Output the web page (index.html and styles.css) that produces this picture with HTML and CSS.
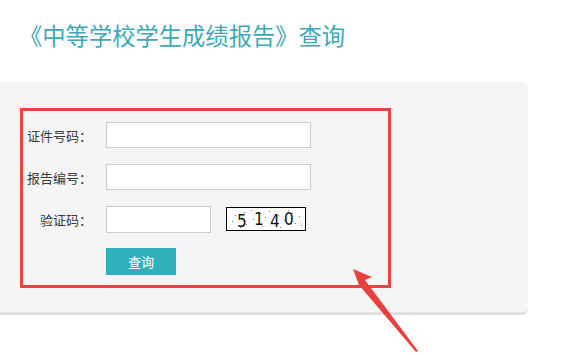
FILE: index.html
```html
<!DOCTYPE html>
<html lang="zh-CN">
<head>
  <meta charset="utf-8">
  <title>中等学校学生成绩报告查询</title>
  <meta name="viewport" content="width=device-width, initial-scale=1.0">
  <link rel="stylesheet" href="styles.css">
</head>
<body>
  <div class="page">
    <h1 class="title">《中等学校学生成绩报告》查询</h1>

    <!-- 查询表单 -->
    <div class="panel">
      <form class="query-box">
        <div class="form-row">
          <label class="form-label" for="certNo">证件号码：</label>
          <input class="form-input" id="certNo" type="text">
        </div>
        <div class="form-row">
          <label class="form-label" for="reportNo">报告编号：</label>
          <input class="form-input" id="reportNo" type="text">
        </div>
        <div class="form-row">
          <label class="form-label" for="code">验证码：</label>
          <input class="form-input form-input-short" id="code" type="text">
          <!-- 验证码图片 -->
          <svg class="captcha" width="80" height="24" viewBox="0 0 80 24">
            <rect x="0.5" y="0.5" width="79" height="23" fill="#fff" stroke="#000"/>
            <g fill="#777">
              <rect x="6" y="14" width="1" height="1"/>
              <rect x="9" y="8" width="1" height="1"/>
              <rect x="18" y="5" width="1" height="1"/>
              <rect x="20" y="17" width="1" height="1"/>
              <rect x="25" y="3" width="1" height="1"/>
              <rect x="27" y="12" width="1" height="1"/>
              <rect x="34" y="6" width="1" height="1"/>
              <rect x="36" y="19" width="1" height="1"/>
              <rect x="39" y="10" width="1" height="1"/>
              <rect x="43" y="4" width="1" height="1"/>
              <rect x="46" y="15" width="1" height="1"/>
              <rect x="52" y="8" width="1" height="1"/>
              <rect x="54" y="20" width="1" height="1"/>
              <rect x="58" y="13" width="1" height="1"/>
              <rect x="66" y="6" width="1" height="1"/>
              <rect x="69" y="16" width="1" height="1"/>
              <rect x="73" y="9" width="1" height="1"/>
              <rect x="75" y="18" width="1" height="1"/>
              <rect x="14" y="20" width="1" height="1"/>
              <rect x="62" y="3" width="1" height="1"/>
            </g>
            <g font-family="'DejaVu Sans Condensed', 'DejaVu Sans', sans-serif" font-size="17" fill="#111">
              <text x="11" y="20">5</text>
              <text x="28" y="18">1</text>
              <text x="44" y="20">4</text>
              <text x="58" y="18">0</text>
            </g>
          </svg>
        </div>
        <div class="form-row form-actions">
          <button class="btn-query" type="button">查询</button>
        </div>
      </form>
    </div>

    <!-- 标注箭头 -->
    <svg class="arrow" width="80" height="100" viewBox="0 0 80 100">
      <polygon points="3,4 22,12 15,15 68,86 66,87 9,20 10,23" fill="#e8403e"/>
    </svg>
  </div>
</body>
</html>
```

FILE: styles.css
```css
body {
  margin: 0;
  padding: 0;
  background: #fff;
  font-family: "Microsoft YaHei", "Noto Sans CJK SC", sans-serif;
  color: #333;
}
.page {
  position: relative;
  width: 566px;
  height: 355px;
  overflow: hidden;
}
.title {
  margin: 0;
  padding: 18px 0 0 19px;
  height: 34px;
  line-height: 34px;
  font-size: 23.3px;
  font-weight: normal;
  color: #3fa8b6;
}
.panel {
  margin-top: 30px;
  width: 528px;
  padding: 26px 0 24px 20px;
  box-sizing: border-box;
  background: #f5f5f5;
  border-radius: 0 6px 6px 0;
  border-bottom: 3px solid #e0e0e0;
}
.query-box {
  width: 371px;
  box-sizing: border-box;
  border: 3px solid #e84343;
  padding: 11px 0 10px 0;
  display: flex;
  flex-direction: column;
  gap: 16px;
}
.form-row {
  display: flex;
  align-items: center;
  height: 26px;
}
.form-label {
  width: 69px;
  margin-right: 14px;
  text-align: right;
  font-size: 13px;
  color: #3a3a3a;
  white-space: nowrap;
}
.form-input {
  width: 205px;
  height: 26px;
  box-sizing: border-box;
  margin: 0;
  padding: 0 4px;
  border: 1px solid #ccc;
  background: #fff;
  outline: none;
}
.form-input-short {
  width: 105px;
  height: 27px;
}
.captcha {
  display: block;
  margin-left: 15px;
}
.form-actions {
  padding-left: 83px;
  height: 27px;
}
.btn-query {
  width: 70px;
  height: 27px;
  border: none;
  margin: 0;
  padding: 0;
  background: #2fb0bc;
  color: #fff;
  font-family: inherit;
  font-size: 13px;
  cursor: pointer;
}
.arrow {
  position: absolute;
  left: 350px;
  top: 265px;
}
```
